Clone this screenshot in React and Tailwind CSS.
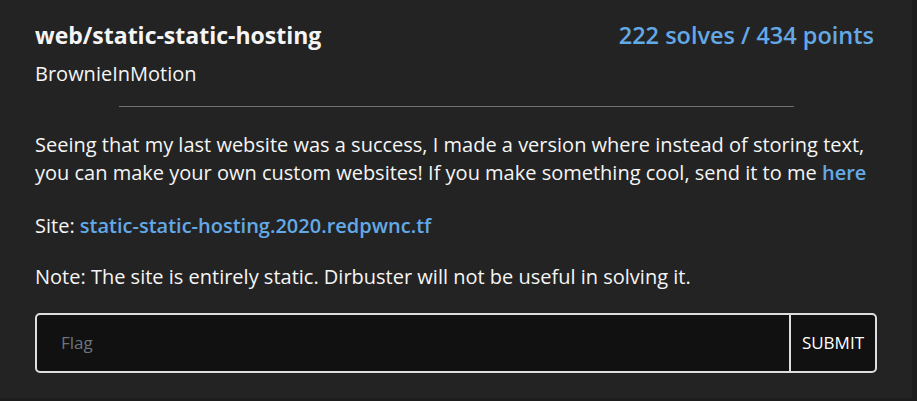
import React from 'react'

export default function App() {
  return (
    <div className="w-[917px] h-[401px] bg-[#1d1d1d] overflow-hidden" style={{ fontFamily: '"Open Sans", "Noto Sans", sans-serif' }}>
      <div className="w-[912px] h-[398px] bg-[#232323] px-[35px] pt-[19px] text-[#f5f5f5]">
        {/* Header */}
        <div className="flex items-start justify-between">
          <div>
            <h1 className="text-[23px] font-bold leading-[32px]">web/static-static-hosting</h1>
            <p className="text-[20px] leading-[26px] mt-[10px]">BrownieInMotion</p>
          </div>
          <span className="text-[23.5px] font-semibold leading-[32px] text-[#63a9e6] mr-[3px]">222 solves / 434 points</span>
        </div>
        <div className="mx-auto mt-[19px] w-[675px] h-px bg-[#6f6f6f]" />

        {/* Description */}
        <div className="mt-[24px] text-[20px] leading-[28px]">
          <p>
            Seeing that my last website was a success, I made a version where instead of storing text,
            <br />
            you can make your own custom websites! If you make something cool, send it to me{' '}
            <a className="text-[#63a9e6] font-semibold">here</a>
          </p>
          <p className="mt-[25px]">
            Site: <a className="text-[#63a9e6] font-semibold">static-static-hosting.2020.redpwnc.tf</a>
          </p>
          <p className="mt-[23px]">Note: The site is entirely static. Dirbuster will not be useful in solving it.</p>
        </div>

        {/* Flag form */}
        <div className="mt-[22px] flex h-[60px] border-2 border-[#dedede] rounded-[5px] bg-[#111111] overflow-hidden">
          <input
            placeholder="Flag"
            className="flex-1 min-w-0 bg-transparent px-[24px] text-[17px] text-white placeholder-[#6c757d] outline-none"
          />
          <button className="border-l-2 border-[#dedede] px-[11px] text-[17px] text-white uppercase">Submit</button>
        </div>
      </div>
    </div>
  )
}
